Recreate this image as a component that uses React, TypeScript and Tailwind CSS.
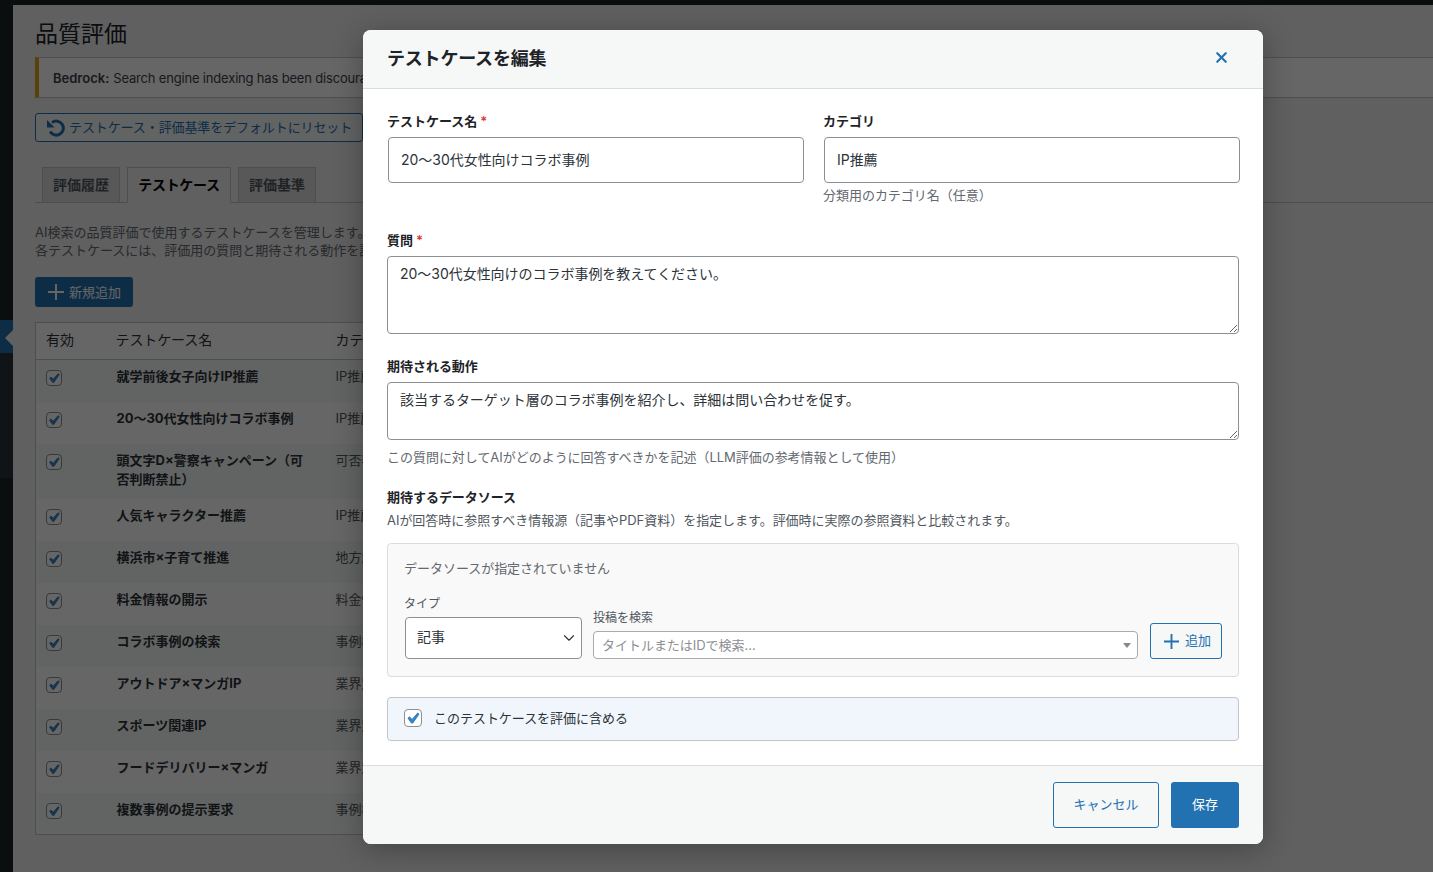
import { X, ChevronDown } from 'lucide-react';

const rows = [
  { name: '就学前後女子向けIP推薦', category: 'IP推薦' },
  { name: '20〜30代女性向けコラボ事例', category: 'IP推薦' },
  { name: '頭文字D×警察キャンペーン（可否判断禁止）', category: '可否判断' },
  { name: '人気キャラクター推薦', category: 'IP推薦' },
  { name: '横浜市×子育て推進', category: '地方創生' },
  { name: '料金情報の開示', category: '料金情報' },
  { name: 'コラボ事例の検索', category: '事例検索' },
  { name: 'アウトドア×マンガIP', category: '業界別' },
  { name: 'スポーツ関連IP', category: '業界別' },
  { name: 'フードデリバリー×マンガ', category: '業界別' },
  { name: '複数事例の提示要求', category: '事例検索' },
];

function CheckMark({ className }: { className: string }) {
  return (
    <span className={`flex items-center justify-center rounded-[4px] border border-[#8c8f94] bg-white ${className}`}>
      <svg viewBox="3 2 15 15" className="h-full w-full" fill="#3582c4" stroke="#3582c4" strokeWidth="0.9">
        <path d="M14.83 4.89l1.34.94-5.81 8.38H9.02L5.78 9.67l1.34-1.25 2.57 2.4z" />
      </svg>
    </span>
  );
}

function PlusIcon({ size }: { size: number }) {
  return (
    <svg width={size} height={size} viewBox="0 0 16 16" fill="none" stroke="currentColor" strokeWidth="2" className="shrink-0">
      <path d="M8 0v16M0 8h16" />
    </svg>
  );
}

function Background() {
  return (
    <div className="flex h-full flex-col bg-[#f0f0f1]">
      <div className="h-[5px] shrink-0 bg-[#1d2327]" />
      <div className="flex min-h-0 flex-1">
        <div className="flex w-[13px] shrink-0 flex-col bg-[#1d2327]">
          <div className="h-[315px]" />
          <div className="relative h-[33px] bg-[#2271b1]">
            <span className="absolute right-0 top-[10px] h-0 w-0 border-y-[8px] border-r-[8px] border-y-transparent border-r-[#f0f0f1]" />
          </div>
          <div className="h-[125px] bg-[#2c3338]" />
        </div>
        <div className="min-w-0 flex-1 overflow-hidden pl-[22px] text-[13px] text-[#3c434a]">
          <h1 className="mt-[15px] text-[23px] leading-[29px] text-[#1d2327]">品質評価</h1>
          <div className="-mr-[4px] mt-[8px] flex h-[41px] items-center border border-l-4 border-[#c3c4c7] border-l-[#dba617] bg-white pl-[14px] pt-[2px]">
            <span className="font-semibold">Bedrock:</span>
            <span className="ml-1 tracking-[-0.18px]">Search engine indexing has been discouraged.</span>
          </div>
          <button className="mt-[15px] flex h-[29px] w-[328px] items-center gap-[3px] rounded-[3px] border border-[#2271b1] bg-[#f6f7f7] pl-[10px] text-[#2271b1]">
            <svg width="20" height="18" viewBox="0 0 20 18" fill="none" className="shrink-0">
              <path d="M4.2 12.5A7 7 0 1 0 6 3.6" stroke="currentColor" strokeWidth="3" />
              <path d="M1 1v7.5h7.5z" fill="currentColor" />
            </svg>
            <span className="tracking-[-0.1px]">テストケース・評価基準をデフォルトにリセット</span>
          </button>
          <div className="mt-[25px] flex h-[36px] gap-[7px] border-b border-[#c3c4c7] pl-[7px] text-center text-[14px] font-semibold leading-[24px]">
            <span className="h-[36px] w-[78px] border border-[#c3c4c7] bg-[#dcdcde] py-[5px] text-[#50575e]">評価履歴</span>
            <span className="h-[36px] w-[104px] border border-[#c3c4c7] border-b-[#f0f0f1] bg-[#f0f0f1] py-[5px] tracking-[-0.3px] text-black">テストケース</span>
            <span className="h-[36px] w-[78px] border border-[#c3c4c7] bg-[#dcdcde] py-[5px] text-[#50575e]">評価基準</span>
          </div>
          <p className="mt-[20px] leading-[18px] text-[#646970]">
            AI検索の品質評価で使用するテストケースを管理します。
            <br />
            各テストケースには、評価用の質問と期待される動作を設定します。
          </p>
          <button className="mt-[18px] flex h-[30px] w-[98px] items-center gap-[5px] rounded-[3px] bg-[#2271b1] pl-[13px] text-white">
            <PlusIcon size={16} />
            <span className="pt-px">新規追加</span>
          </button>
          <table className="mt-[15px] w-[1100px] table-fixed border border-[#c3c4c7] bg-white text-left">
            <thead>
              <tr className="h-[37px] border-b border-[#c3c4c7] text-[14px] text-[#2c3338]">
                <th className="w-[71px] pb-[3px] pl-[10px] font-normal">有効</th>
                <th className="w-[219px] pb-[3px] pl-[9px] font-normal tracking-[-0.1px]">テストケース名</th>
                <th className="pb-[3px] pl-[10px] font-normal">カテゴリ</th>
              </tr>
            </thead>
            <tbody>
              {rows.map((row, i) => (
                <tr key={row.name} className={i % 2 === 0 ? 'bg-[#f6f7f7]' : 'bg-white'}>
                  <td className="h-[42px] pl-[10px] pt-[10px] align-top">
                    <CheckMark className="h-4 w-4" />
                  </td>
                  <td className="pb-[10px] pl-[10px] pr-[10px] pt-[7px] align-top font-bold leading-[19px] text-[#2c3338]">{row.name}</td>
                  <td className="pl-[10px] pt-[7px] align-top leading-[19px] text-[#50575e]">{row.category}</td>
                </tr>
              ))}
            </tbody>
          </table>
        </div>
      </div>
    </div>
  );
}

function Label({ text, required }: { text: string; required?: boolean }) {
  return (
    <label className="block text-[13px] font-semibold leading-[18px] text-[#1d2327]">
      {text}
      {required && <span className="ml-[3px] text-[#d63638]">*</span>}
    </label>
  );
}

function EditModal() {
  return (
    <div className="flex h-[814px] w-[900px] flex-col overflow-hidden rounded-[8px] bg-white text-[13px] tracking-[-0.03px] text-[#2c3338] shadow-[0_5px_30px_rgba(0,0,0,0.3)]">
      <div className="flex h-[59px] shrink-0 items-center justify-between border-b border-[#dcdcde] bg-[#f6f7f7] pb-[2px] pl-[24px] pr-[33px]">
        <h2 className="text-[18px] font-semibold tracking-[-0.2px] text-[#1d2327]">テストケースを編集</h2>
        <X size={17} strokeWidth={3} className="-translate-y-px text-[#2271b1]" />
      </div>

      <div className="flex-1 px-[24px] pt-[23px]">
        <div className="grid grid-cols-2 gap-[20px]">
          <div>
            <Label text="テストケース名" required />
            <input
              readOnly
              value="20〜30代女性向けコラボ事例"
              className="ml-px mt-[7px] block h-[46px] w-full rounded-[4px] border border-[#8c8f94] px-[12px] pb-[2px] text-[14px] outline-none"
            />
          </div>
          <div>
            <Label text="カテゴリ" />
            <input
              readOnly
              value="IP推薦"
              className="ml-px mt-[7px] block h-[46px] w-full rounded-[4px] border border-[#8c8f94] px-[12px] pb-[2px] text-[14px] outline-none"
            />
            <p className="mt-[3px] leading-[18px] text-[#646970]">分類用のカテゴリ名（任意）</p>
          </div>
        </div>

        <div className="mt-[27px]">
          <Label text="質問" required />
          <textarea
            readOnly
            value="20〜30代女性向けのコラボ事例を教えてください。"
            className="mt-[7px] block h-[78px] w-full rounded-[4px] border border-[#8c8f94] px-[12px] py-[7px] text-[14px] leading-[20px] outline-none"
          />
        </div>

        <div className="mt-[23px]">
          <Label text="期待される動作" />
          <textarea
            readOnly
            value="該当するターゲット層のコラボ事例を紹介し、詳細は問い合わせを促す。"
            className="mt-[7px] block h-[58px] w-full rounded-[4px] border border-[#8c8f94] px-[12px] py-[7px] text-[14px] leading-[20px] outline-none"
          />
          <p className="mt-[8px] leading-[18px] text-[#646970]">この質問に対してAIがどのように回答すべきかを記述（LLM評価の参考情報として使用）</p>
        </div>

        <div className="mt-[22px]">
          <Label text="期待するデータソース" />
          <p className="mt-[5px] leading-[18px] text-[#50575e]">AIが回答時に参照すべき情報源（記事やPDF資料）を指定します。評価時に実際の参照資料と比較されます。</p>
        </div>

        <div className="mt-[14px] h-[134px] rounded-[4px] border border-[#dcdcde] bg-[#f9f9f9] px-[16px] pt-[15px]">
          <p className="leading-[18px] text-[#646970]">データソースが指定されていません</p>
          <div className="mt-[18px] flex items-end">
            <div className="w-[178px]">
              <span className="block text-[12px] leading-[18px] text-[#50575e]">タイプ</span>
              <div className="ml-px mt-[4px] flex h-[42px] items-center justify-between rounded-[4px] border border-[#8c8f94] bg-white pb-[3px] pl-[11px] pr-[3px] text-[14px]">
                <span>記事</span>
                <ChevronDown size={18} strokeWidth={1.5} className="translate-y-px" />
              </div>
            </div>
            <div className="ml-[11px] flex-1">
              <span className="block text-[12px] leading-[18px] text-[#50575e]">投稿を検索</span>
              <div className="mt-[4px] flex h-[28px] items-center justify-between rounded-[4px] border border-[#aaaaaa] bg-white pl-[8px] pr-[6px] pt-[2px] text-[#8c8f94]">
                <span>タイトルまたはIDで検索...</span>
                <svg width="8" height="5" viewBox="0 0 8 5" fill="#888888" className="-translate-y-px">
                  <path d="M0 0h8L4 5z" />
                </svg>
              </div>
            </div>
            <button className="ml-[12px] flex h-[36px] w-[72px] items-center gap-[6px] rounded-[3px] border border-[#2271b1] bg-[#f6f7f7] pl-[13px] text-[#2271b1]">
              <PlusIcon size={15} />
              <span>追加</span>
            </button>
          </div>
        </div>

        <div className="mt-[20px] flex h-[44px] items-center gap-[12px] rounded-[4px] border border-[#c3c4c7] bg-[#f0f6fc] pl-[16px]">
          <CheckMark className="h-[18px] w-[18px] -translate-y-[1px]" />
          <span>このテストケースを評価に含める</span>
        </div>
      </div>

      <div className="flex h-[79px] shrink-0 justify-end gap-[12px] border-t border-[#dcdcde] bg-[#f6f7f7] pr-[24px] pt-[16px]">
        <button className="h-[46px] w-[106px] rounded-[3px] border border-[#2271b1] bg-[#f6f7f7] text-[#2271b1]">キャンセル</button>
        <button className="h-[46px] w-[68px] rounded-[3px] bg-[#2271b1] text-white">保存</button>
      </div>
    </div>
  );
}

export default function App() {
  return (
    <div className="relative h-[872px] w-full overflow-hidden [font-family:Inter,'Noto_Sans_CJK_JP',sans-serif]">
      <Background />
      <div className="absolute inset-0 bg-black/60 pl-[363px] pt-[30px]">
        <EditModal />
      </div>
    </div>
  );
}
